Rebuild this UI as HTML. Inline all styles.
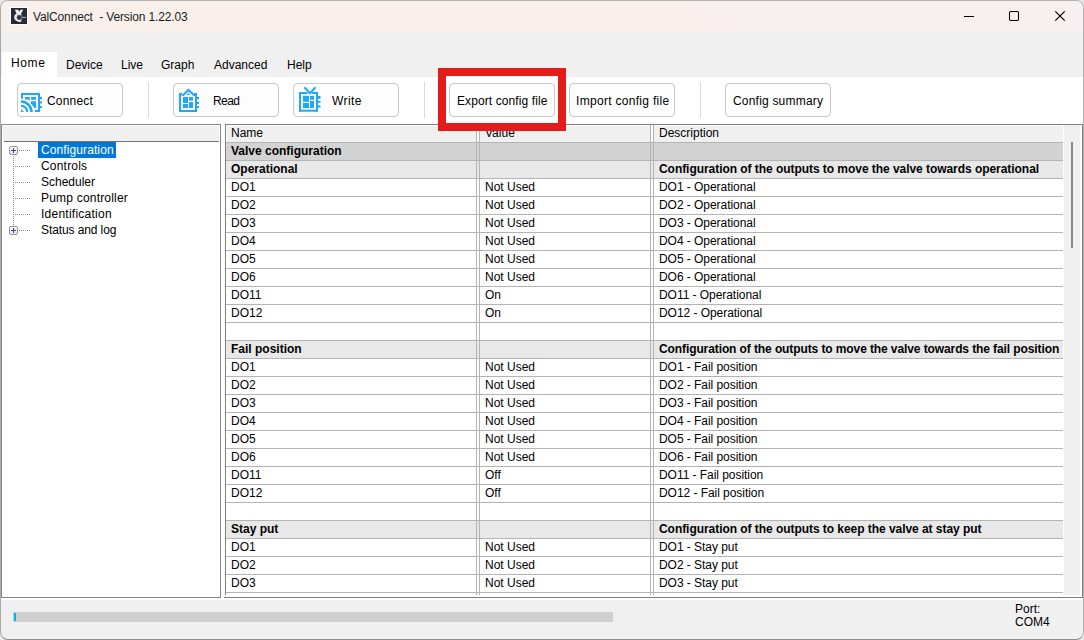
<!DOCTYPE html>
<html><head><meta charset="utf-8">
<style>
*{box-sizing:border-box;margin:0;padding:0}
html,body{width:1084px;height:640px;overflow:hidden;background:#e9e9e9}
body{font-family:"Liberation Sans",sans-serif;font-size:12px;color:#000;position:relative}
.a{position:absolute}
i{position:absolute;display:block}
.win{left:0;top:0;width:1084px;height:640px;border:1px solid #b2b2b2;border-bottom-color:#8e8e8e;border-left-color:#aaaaaa;border-radius:8px;background:#f0f0f0;overflow:hidden}
.ttext{left:33px;top:10px;line-height:15px;white-space:pre;font-size:12px;color:#1c1c1c;letter-spacing:-0.14px}
.mi{top:58px;line-height:15px;white-space:pre}
.btn{top:83px;height:34px;border:1px solid #c9c9c9;border-radius:4px;background:#fdfdfd}
.btext{top:94px;line-height:15px;white-space:pre}
.sep{top:82px;width:1px;height:36px;background:#d9d9d9}
.tree{left:1px;top:124px;width:220px;height:474px;border:1px solid #828790;background:#fff}
.grid{left:225px;top:124px;width:858px;height:474px;border:1px solid #808080;background:#fff}
.gt{line-height:15px;white-space:pre}
.b{font-weight:bold}
.tt{line-height:15px;white-space:pre}
.hl{left:226px;width:837px;height:1px;background:#b4b4b4}
.vl{top:125px;width:1px;height:470px;background:#b4b4b4}
.pb{width:9px;height:9px;border:1px solid #979797;border-radius:2px;background:linear-gradient(#fff,#e6e6e6)}
.ph{left:1px;top:3px;width:5px;height:1px;background:#2c4b8e}
.pv{left:3px;top:1px;width:1px;height:5px;background:#2c4b8e}
.dh{height:1px;background-image:linear-gradient(90deg,#8e8e8e 1px,transparent 1px);background-size:2px 1px}
.dv{width:1px;background-image:linear-gradient(#8e8e8e 1px,transparent 1px);background-size:1px 2px}
</style></head>
<body>
<div class="a win"></div>
<!-- title bar -->
<div class="a" style="left:1px;top:1px;width:1082px;height:32px;border-radius:7px 7px 0 0;background:linear-gradient(90deg,#f9f0ec,#f9f0ed 50%,#f7f0f0)"></div>
<div class="a" style="left:10px;top:7px;width:18px;height:18px;background:#fdfbfb"></div>
<svg class="a" style="left:11px;top:8px" width="16" height="16" viewBox="0 0 16 16">
  <defs><clipPath id="cl"><rect x="0" y="0" width="10.3" height="16"/></clipPath></defs>
  <rect width="16" height="16" fill="#262b34"/>
  <path d="M10 6.5 L12 8.5 L15 9 L12 10 L10.5 13 Z" fill="#4d5460"/>
  <rect x="11" y="9" width="4" height="1" fill="#a4aab2"/>
  <ellipse cx="8.4" cy="9.3" rx="5.3" ry="4.7" fill="#e4e4e4" clip-path="url(#cl)"/>
  <path d="M3.8 1.8 L7.3 1.8 L8.2 3.8 L9.4 1.8 L12.4 1.8 L10 5.6 L5.5 5.6 Z" fill="#f0f0f0"/>
  <circle cx="8.2" cy="9.5" r="2.4" fill="#30363f"/>
</svg>
<div class="a ttext">ValConnect  - Version 1.22.03</div>
<svg class="a" style="left:960px;top:6px" width="110" height="20" viewBox="0 0 110 20">
  <rect x="4" y="10" width="10" height="1" fill="#000"/>
  <rect x="49.5" y="5.5" width="9" height="9" rx="1.2" fill="none" stroke="#000" stroke-width="1.1"/>
  <path d="M95.3 5.3 L104.7 14.7 M104.7 5.3 L95.3 14.7" stroke="#000" stroke-width="1.2"/>
</svg>
<!-- menu -->
<div class="a" style="left:1px;top:33px;width:1082px;height:44px;background:#f0f0f0"></div>
<div class="a" style="left:2px;top:52px;width:55px;height:25px;background:#fff"></div>
<div class="a mi" style="left:11px;top:56px;letter-spacing:0.6px">Home</div>
<div class="a mi" style="left:66px">Device</div>
<div class="a mi" style="left:121px">Live</div>
<div class="a mi" style="left:161px">Graph</div>
<div class="a mi" style="left:214px">Advanced</div>
<div class="a mi" style="left:287px">Help</div>
<!-- content -->
<div class="a" style="left:1px;top:77px;width:1082px;height:523px;background:#fff"></div>

<div class="a btn" style="left:17px;width:106px"></div>
<svg class="a" style="left:20px;top:91px" width="24" height="24" viewBox="0 0 24 24" fill="#1fa7fc">
  <rect x="1" y="2" width="19" height="2"/>
  <rect x="1" y="2" width="2" height="5.75"/>
  <rect x="18" y="2" width="2" height="19"/>
  <rect x="15" y="19" width="5" height="2"/>
  <rect x="20" y="6" width="2" height="2"/><rect x="20" y="10.5" width="2" height="2"/><rect x="20" y="15" width="2" height="2"/>
  <path d="M5 6 L9.75 6 L9.75 10 L8 8.6 L5 8.6 Z"/>
  <rect x="11" y="6" width="5" height="2.75"/>
  <path d="M11 10.25 L16 10.25 L16 17 L14.5 17 L11 12.5 Z"/>
  <path d="M1 9.25 A11.75 11.75 0 0 1 12.75 21 L10.2 21 A9.2 9.2 0 0 0 1 11.8 Z"/>
  <path d="M1 13.7 A7.3 7.3 0 0 1 8.3 21 L6.2 21 A5.2 5.2 0 0 0 1 15.8 Z"/>
  <path d="M1 18 L4 21 L1 21 Z"/>
</svg>
<div class="a btext" style="left:47px;letter-spacing:0.2px">Connect</div>
<div class="a sep" style="left:148px"></div>

<div class="a btn" style="left:173px;width:106px"></div>
<svg class="a" style="left:178px;top:88px" width="24" height="24" viewBox="0 0 24 24" fill="#1fa7fc">
  <rect x="1" y="5" width="2" height="19"/>
  <rect x="1" y="22" width="18" height="2"/>
  <rect x="17" y="5" width="2" height="19"/>
  <rect x="1" y="5" width="3" height="2"/>
  <rect x="16" y="5" width="3" height="2"/>
  <rect x="19" y="9" width="2" height="2"/><rect x="19" y="14" width="2" height="2"/><rect x="19" y="18" width="2" height="2"/>
  <path d="M3.6 7.2 L10.5 0.6 L17.4 7.2 L16 8.6 L10.5 3.4 L5 8.6 Z"/>
  <path d="M8.5 7 L10.5 5 L12.5 7 Z"/>
  <rect x="5" y="9" width="5" height="6"/>
  <rect x="5" y="16" width="5" height="4"/>
  <rect x="11" y="9" width="4" height="3.7"/>
  <rect x="11" y="14" width="4" height="6"/>
</svg>
<div class="a btext" style="left:213px;letter-spacing:-0.6px">Read</div>

<div class="a btn" style="left:293px;width:106px"></div>
<svg class="a" style="left:298px;top:86px" width="24" height="26" viewBox="0 0 24 26" fill="#1fa7fc">
  <rect x="1" y="6" width="2" height="19.7"/>
  <rect x="1" y="23.7" width="19" height="2"/>
  <rect x="18" y="6" width="2" height="19.7"/>
  <rect x="1" y="6" width="8.6" height="2"/>
  <rect x="14.2" y="6" width="5.8" height="2"/>
  <rect x="20" y="10" width="2.5" height="2.8"/><rect x="20" y="15" width="2.5" height="1.8"/><rect x="20" y="19.4" width="2.5" height="2.2"/>
  <path d="M6.3 1.3 L12 7.2 L17.5 1.3" fill="none" stroke="#1fa7fc" stroke-width="2"/>
  <rect x="5" y="9.8" width="6" height="6"/>
  <rect x="5" y="17" width="6" height="5"/>
  <rect x="12" y="9.8" width="4" height="4"/>
  <rect x="12" y="15" width="4" height="7"/>
</svg>
<div class="a btext" style="left:332px;letter-spacing:0.4px">Write</div>
<div class="a sep" style="left:424px"></div>

<div class="a btn" style="left:449px;width:106px"></div>
<div class="a btext" style="left:457px;letter-spacing:0.1px">Export config file</div>
<div class="a btn" style="left:569px;width:106px"></div>
<div class="a btext" style="left:576px;letter-spacing:0.3px">Import config file</div>
<div class="a sep" style="left:700px"></div>
<div class="a btn" style="left:725px;width:106px"></div>
<div class="a btext" style="left:733px;letter-spacing:0.2px">Config summary</div>

<!-- tree -->
<div class="a tree"></div>
<div class="a" style="left:3px;top:126px;width:216px;height:15px;background:#f0f0f0"></div>
<div class="a" style="left:4px;top:141px;width:215px;height:1px;background:#747474"></div>
<div class="a" style="left:38px;top:142px;width:78px;height:16px;background:#0078d7"></div>
<div class="a tt" style="left:41px;top:143px;color:#fff;letter-spacing:0.1px">Configuration</div>
<div class="a pb" style="left:9px;top:146px"><i class="ph"></i><i class="pv"></i></div>
<div class="a dh" style="left:19px;top:150px;width:11px"></div>
<div class="a tt" style="left:41px;top:159px;letter-spacing:0.2px">Controls</div>
<div class="a dh" style="left:15px;top:166px;width:15px"></div>
<div class="a tt" style="left:41px;top:175px;letter-spacing:0px">Scheduler</div>
<div class="a dh" style="left:15px;top:182px;width:15px"></div>
<div class="a tt" style="left:41px;top:191px;letter-spacing:0.2px">Pump controller</div>
<div class="a dh" style="left:15px;top:198px;width:15px"></div>
<div class="a tt" style="left:41px;top:207px;letter-spacing:0.25px">Identification</div>
<div class="a dh" style="left:15px;top:214px;width:15px"></div>
<div class="a tt" style="left:41px;top:223px;letter-spacing:-0.1px">Status and log</div>
<div class="a pb" style="left:9px;top:226px"><i class="ph"></i><i class="pv"></i></div>
<div class="a dh" style="left:19px;top:230px;width:11px"></div>
<div class="a dv" style="left:13px;top:156px;height:70px"></div>

<!-- grid -->
<div class="a grid" style="border-left:none;border-bottom:none"></div>
<div class="a" style="left:225px;top:124px;width:1px;height:471px;background:#808080"></div>
<div class="a" style="left:224px;top:597px;width:859px;height:1px;background:#808080"></div>
<div class="a" style="left:1063px;top:125px;width:1px;height:472px;background:#fff"></div>
<div class="a" style="left:1064px;top:125px;width:16px;height:470px;background:#f0f0f0"></div>
<div class="a" style="left:1071px;top:142px;width:2px;height:106px;background:#8a8a8a"></div>
<div class="a" style="left:227px;top:126px;width:836px;height:16px;background:#f0f0f0"></div>
<div class="a" style="left:477px;top:126px;width:2px;height:16px;background:#fafafa"></div><div class="a" style="left:651px;top:126px;width:2px;height:16px;background:#fafafa"></div>
<div class="a gt" style="left:231px;top:126px">Name</div>
<div class="a gt" style="left:485px;top:126px">Value</div>
<div class="a gt" style="left:659px;top:126px">Description</div>
<div class="a" style="left:226px;top:143px;width:837px;height:17px;background:#d3d3d3"></div>
<div class="a gt b" style="left:231px;top:144px">Valve configuration</div>
<div class="a" style="left:226px;top:161px;width:837px;height:17px;background:#e8e8e8"></div>
<div class="a gt b" style="left:231px;top:162px">Operational</div>
<div class="a gt b" style="left:659px;top:162px;letter-spacing:-0.05px">Configuration of the outputs to move the valve towards operational</div>
<div class="a" style="left:226px;top:179px;width:837px;height:17px;background:#ffffff"></div>
<div class="a gt" style="left:231px;top:180px">DO1</div>
<div class="a gt" style="left:485px;top:180px">Not Used</div>
<div class="a gt" style="left:659px;top:180px;letter-spacing:-0.05px">DO1 - Operational</div>
<div class="a" style="left:226px;top:197px;width:837px;height:17px;background:#ffffff"></div>
<div class="a gt" style="left:231px;top:198px">DO2</div>
<div class="a gt" style="left:485px;top:198px">Not Used</div>
<div class="a gt" style="left:659px;top:198px;letter-spacing:-0.05px">DO2 - Operational</div>
<div class="a" style="left:226px;top:215px;width:837px;height:17px;background:#ffffff"></div>
<div class="a gt" style="left:231px;top:216px">DO3</div>
<div class="a gt" style="left:485px;top:216px">Not Used</div>
<div class="a gt" style="left:659px;top:216px;letter-spacing:-0.05px">DO3 - Operational</div>
<div class="a" style="left:226px;top:233px;width:837px;height:17px;background:#ffffff"></div>
<div class="a gt" style="left:231px;top:234px">DO4</div>
<div class="a gt" style="left:485px;top:234px">Not Used</div>
<div class="a gt" style="left:659px;top:234px;letter-spacing:-0.05px">DO4 - Operational</div>
<div class="a" style="left:226px;top:251px;width:837px;height:17px;background:#ffffff"></div>
<div class="a gt" style="left:231px;top:252px">DO5</div>
<div class="a gt" style="left:485px;top:252px">Not Used</div>
<div class="a gt" style="left:659px;top:252px;letter-spacing:-0.05px">DO5 - Operational</div>
<div class="a" style="left:226px;top:269px;width:837px;height:17px;background:#ffffff"></div>
<div class="a gt" style="left:231px;top:270px">DO6</div>
<div class="a gt" style="left:485px;top:270px">Not Used</div>
<div class="a gt" style="left:659px;top:270px;letter-spacing:-0.05px">DO6 - Operational</div>
<div class="a" style="left:226px;top:287px;width:837px;height:17px;background:#ffffff"></div>
<div class="a gt" style="left:231px;top:288px">DO11</div>
<div class="a gt" style="left:485px;top:288px">On</div>
<div class="a gt" style="left:659px;top:288px;letter-spacing:-0.05px">DO11 - Operational</div>
<div class="a" style="left:226px;top:305px;width:837px;height:17px;background:#ffffff"></div>
<div class="a gt" style="left:231px;top:306px">DO12</div>
<div class="a gt" style="left:485px;top:306px">On</div>
<div class="a gt" style="left:659px;top:306px;letter-spacing:-0.05px">DO12 - Operational</div>
<div class="a" style="left:226px;top:323px;width:837px;height:17px;background:#ffffff"></div>
<div class="a" style="left:226px;top:341px;width:837px;height:17px;background:#e8e8e8"></div>
<div class="a gt b" style="left:231px;top:342px">Fail position</div>
<div class="a gt b" style="left:659px;top:342px;letter-spacing:-0.1px">Configuration of the outputs to move the valve towards the fail position</div>
<div class="a" style="left:226px;top:359px;width:837px;height:17px;background:#ffffff"></div>
<div class="a gt" style="left:231px;top:360px">DO1</div>
<div class="a gt" style="left:485px;top:360px">Not Used</div>
<div class="a gt" style="left:659px;top:360px;letter-spacing:-0.05px">DO1 - Fail position</div>
<div class="a" style="left:226px;top:377px;width:837px;height:17px;background:#ffffff"></div>
<div class="a gt" style="left:231px;top:378px">DO2</div>
<div class="a gt" style="left:485px;top:378px">Not Used</div>
<div class="a gt" style="left:659px;top:378px;letter-spacing:-0.05px">DO2 - Fail position</div>
<div class="a" style="left:226px;top:395px;width:837px;height:17px;background:#ffffff"></div>
<div class="a gt" style="left:231px;top:396px">DO3</div>
<div class="a gt" style="left:485px;top:396px">Not Used</div>
<div class="a gt" style="left:659px;top:396px;letter-spacing:-0.05px">DO3 - Fail position</div>
<div class="a" style="left:226px;top:413px;width:837px;height:17px;background:#ffffff"></div>
<div class="a gt" style="left:231px;top:414px">DO4</div>
<div class="a gt" style="left:485px;top:414px">Not Used</div>
<div class="a gt" style="left:659px;top:414px;letter-spacing:-0.05px">DO4 - Fail position</div>
<div class="a" style="left:226px;top:431px;width:837px;height:17px;background:#ffffff"></div>
<div class="a gt" style="left:231px;top:432px">DO5</div>
<div class="a gt" style="left:485px;top:432px">Not Used</div>
<div class="a gt" style="left:659px;top:432px;letter-spacing:-0.05px">DO5 - Fail position</div>
<div class="a" style="left:226px;top:449px;width:837px;height:17px;background:#ffffff"></div>
<div class="a gt" style="left:231px;top:450px">DO6</div>
<div class="a gt" style="left:485px;top:450px">Not Used</div>
<div class="a gt" style="left:659px;top:450px;letter-spacing:-0.05px">DO6 - Fail position</div>
<div class="a" style="left:226px;top:467px;width:837px;height:17px;background:#ffffff"></div>
<div class="a gt" style="left:231px;top:468px">DO11</div>
<div class="a gt" style="left:485px;top:468px">Off</div>
<div class="a gt" style="left:659px;top:468px;letter-spacing:-0.05px">DO11 - Fail position</div>
<div class="a" style="left:226px;top:485px;width:837px;height:17px;background:#ffffff"></div>
<div class="a gt" style="left:231px;top:486px">DO12</div>
<div class="a gt" style="left:485px;top:486px">Off</div>
<div class="a gt" style="left:659px;top:486px;letter-spacing:-0.05px">DO12 - Fail position</div>
<div class="a" style="left:226px;top:503px;width:837px;height:17px;background:#ffffff"></div>
<div class="a" style="left:226px;top:521px;width:837px;height:17px;background:#e8e8e8"></div>
<div class="a gt b" style="left:231px;top:522px">Stay put</div>
<div class="a gt b" style="left:659px;top:522px;letter-spacing:-0.05px">Configuration of the outputs to keep the valve at stay put</div>
<div class="a" style="left:226px;top:539px;width:837px;height:17px;background:#ffffff"></div>
<div class="a gt" style="left:231px;top:540px">DO1</div>
<div class="a gt" style="left:485px;top:540px">Not Used</div>
<div class="a gt" style="left:659px;top:540px;letter-spacing:-0.05px">DO1 - Stay put</div>
<div class="a" style="left:226px;top:557px;width:837px;height:17px;background:#ffffff"></div>
<div class="a gt" style="left:231px;top:558px">DO2</div>
<div class="a gt" style="left:485px;top:558px">Not Used</div>
<div class="a gt" style="left:659px;top:558px;letter-spacing:-0.05px">DO2 - Stay put</div>
<div class="a" style="left:226px;top:575px;width:837px;height:17px;background:#ffffff"></div>
<div class="a gt" style="left:231px;top:576px">DO3</div>
<div class="a gt" style="left:485px;top:576px">Not Used</div>
<div class="a gt" style="left:659px;top:576px;letter-spacing:-0.05px">DO3 - Stay put</div>
<div class="a" style="left:226px;top:593px;width:837px;height:4px;background:#ffffff"></div>
<div class="a hl" style="top:142px"></div>
<div class="a hl" style="top:160px"></div>
<div class="a hl" style="top:178px"></div>
<div class="a hl" style="top:196px"></div>
<div class="a hl" style="top:214px"></div>
<div class="a hl" style="top:232px"></div>
<div class="a hl" style="top:250px"></div>
<div class="a hl" style="top:268px"></div>
<div class="a hl" style="top:286px"></div>
<div class="a hl" style="top:304px"></div>
<div class="a hl" style="top:322px"></div>
<div class="a hl" style="top:340px"></div>
<div class="a hl" style="top:358px"></div>
<div class="a hl" style="top:376px"></div>
<div class="a hl" style="top:394px"></div>
<div class="a hl" style="top:412px"></div>
<div class="a hl" style="top:430px"></div>
<div class="a hl" style="top:448px"></div>
<div class="a hl" style="top:466px"></div>
<div class="a hl" style="top:484px"></div>
<div class="a hl" style="top:502px"></div>
<div class="a hl" style="top:520px"></div>
<div class="a hl" style="top:538px"></div>
<div class="a hl" style="top:556px"></div>
<div class="a hl" style="top:574px"></div>
<div class="a hl" style="top:592px"></div>
<div class="a vl" style="left:476px"></div>
<div class="a vl" style="left:479px"></div>
<div class="a vl" style="left:650px"></div>
<div class="a vl" style="left:653px"></div>

<!-- status -->
<div class="a" style="left:13px;top:612px;width:600px;height:10px;background:#d0d0d0"></div>
<div class="a" style="left:14px;top:613px;width:2px;height:8px;background:#06b0f8"></div>
<div class="a tt" style="left:1015px;top:603px;line-height:13px">Port:<br>COM4</div>

<!-- red highlight -->
<div class="a" style="left:438px;top:68px;width:128px;height:63px;border:8px solid #e31b1b"></div>
</body></html>
